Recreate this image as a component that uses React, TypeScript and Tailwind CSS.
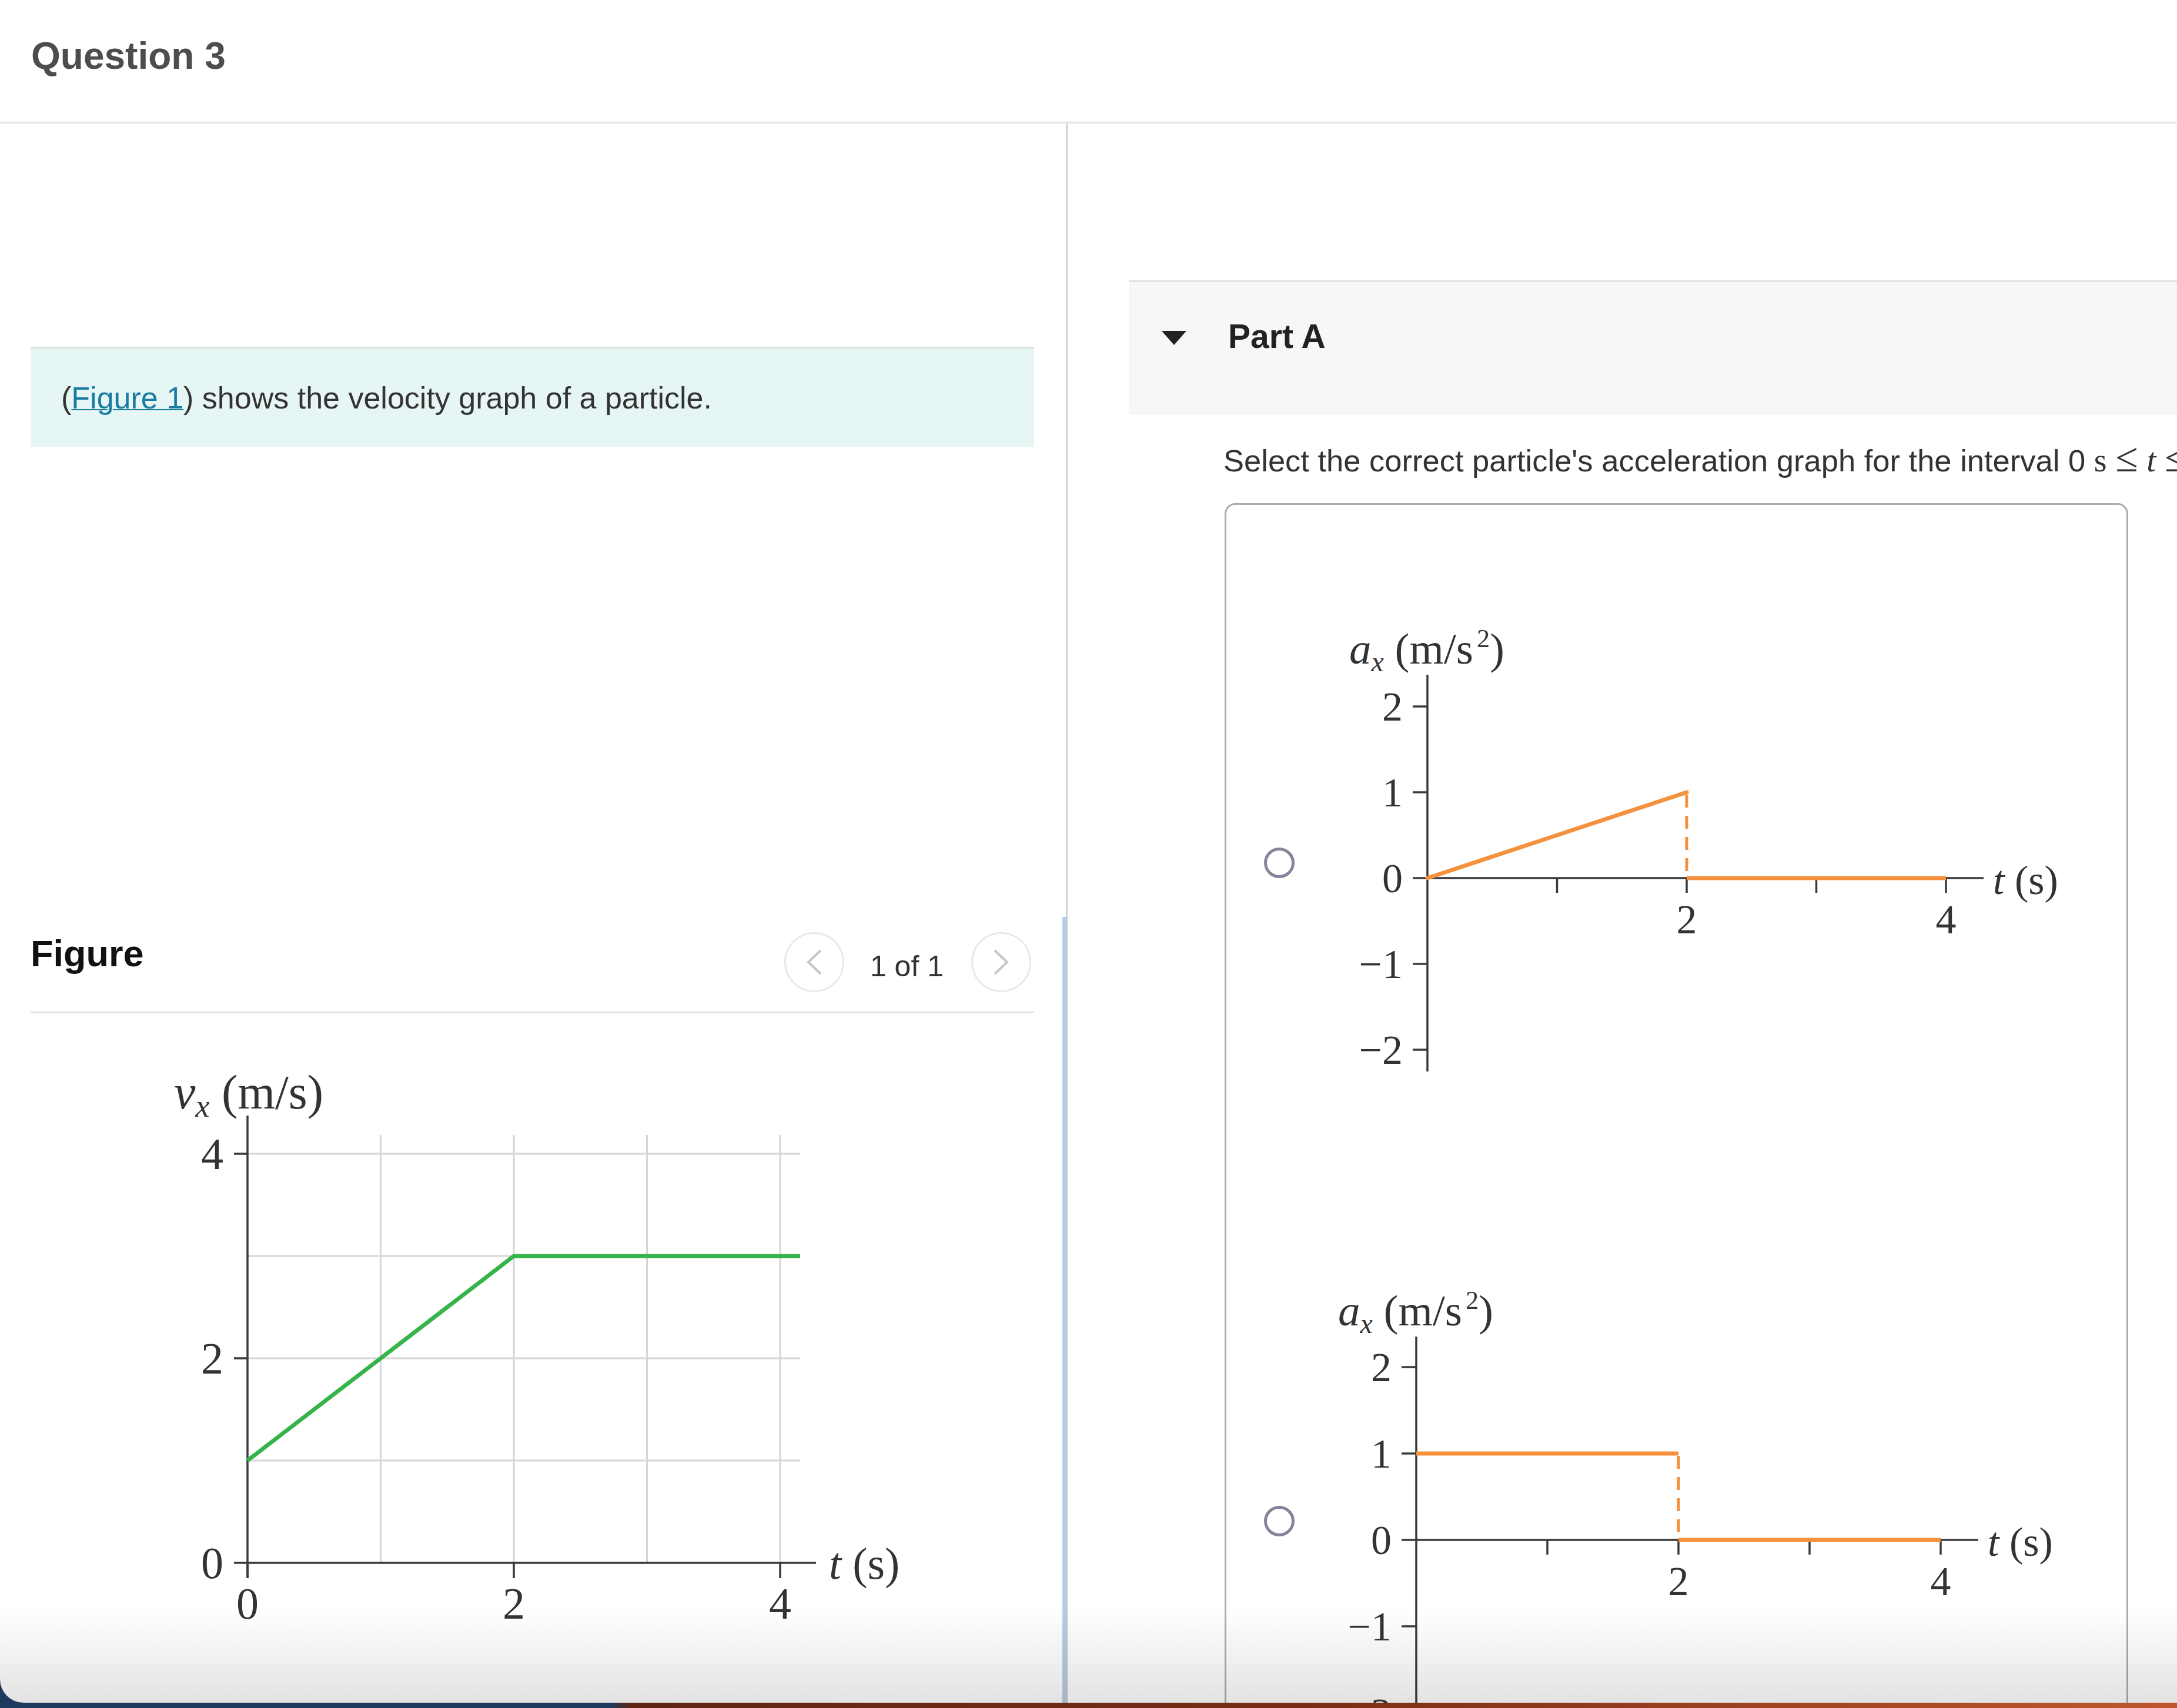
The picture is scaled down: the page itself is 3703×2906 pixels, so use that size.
import React from 'react';

// velocity graph shown under "Figure"
const VelocityGraph: React.FC = () => {
  const ox = 181;
  const oy = 859;
  const ux = 226.5;
  const uy = 174;
  const X = (t: number) => ox + t * ux;
  const Y = (v: number) => oy - v * uy;
  const serif = "'Liberation Serif', 'Times New Roman', serif";

  return (
    <svg width={1400} height={1000} viewBox="0 0 1400 1000" className="block">
      {[1, 2, 3, 4].map((v) => (
        <line key={`h${v}`} x1={ox} x2={1121} y1={Y(v)} y2={Y(v)} stroke="#d6d6d6" strokeWidth={3} />
      ))}
      {[1, 2, 3, 4].map((t) => (
        <line key={`v${t}`} x1={X(t)} x2={X(t)} y1={131} y2={oy} stroke="#d6d6d6" strokeWidth={3} />
      ))}
      <line x1={ox} x2={ox} y1={98} y2={885} stroke="#3a3a3a" strokeWidth={3.5} />
      <line x1={158} x2={1148} y1={oy} y2={oy} stroke="#3a3a3a" strokeWidth={3.5} />
      {[4, 2].map((v) => (
        <line key={`ty${v}`} x1={158} x2={ox} y1={Y(v)} y2={Y(v)} stroke="#3a3a3a" strokeWidth={3.5} />
      ))}
      {[0, 2, 4].map((t) => (
        <line key={`tx${t}`} x1={X(t)} x2={X(t)} y1={oy} y2={885} stroke="#3a3a3a" strokeWidth={3.5} />
      ))}
      <polyline
        points={`${ox},${Y(1)} ${X(2)},${Y(3)} 1121,${Y(3)}`}
        fill="none"
        stroke="#36b44b"
        strokeWidth={7}
        strokeLinejoin="round"
      />
      <g fontFamily={serif} fontSize={76} fill="#333">
        {[4, 2, 0].map((v) => (
          <text key={`ly${v}`} x={140} y={Y(v) + 26} textAnchor="end">
            {v}
          </text>
        ))}
        {[0, 2, 4].map((t) => (
          <text key={`lx${t}`} x={X(t)} y={954} textAnchor="middle">
            {t}
          </text>
        ))}
        <text x={1170} y={886}>
          <tspan fontStyle="italic">t</tspan>
          <tspan>{' (s)'}</tspan>
        </text>
        <text x={56} y={86} fontSize={82}>
          <tspan fontStyle="italic">v</tspan>
          <tspan fontStyle="italic" fontSize={54} dy={14}>x</tspan>
          <tspan dy={-14}>{' (m/s)'}</tspan>
        </text>
      </g>
    </svg>
  );
};

interface AccelGraphProps {
  ox: number;
  zero: number;
  unit: number;
  ux: number;
  variant: 'ramp' | 'step';
}

// one answer choice: acceleration graph
const AccelGraph: React.FC<AccelGraphProps> = ({ ox, zero, unit, ux, variant }) => {
  const X = (t: number) => ox + t * ux;
  const Y = (a: number) => zero - a * unit;
  const serif = "'Liberation Serif', 'Times New Roman', serif";
  const orange = '#f5913d';

  return (
    <svg width={1300} height={860} viewBox="0 0 1300 860" className="block">
      <line x1={ox} x2={ox} y1={zero - 346} y2={zero + 329} stroke="#3a3a3a" strokeWidth={3.5} />
      <line x1={ox - 25} x2={X(4) + 64} y1={zero} y2={zero} stroke="#3a3a3a" strokeWidth={3.5} />
      {[2, 1, -1, -2].map((a) => (
        <line key={`ty${a}`} x1={ox - 25} x2={ox} y1={Y(a)} y2={Y(a)} stroke="#3a3a3a" strokeWidth={3.5} />
      ))}
      {[1, 2, 3, 4].map((t) => (
        <line key={`tx${t}`} x1={X(t)} x2={X(t)} y1={zero} y2={zero + 25} stroke="#3a3a3a" strokeWidth={3.5} />
      ))}
      {variant === 'ramp' ? (
        <line x1={ox} y1={zero} x2={X(2)} y2={Y(1)} stroke={orange} strokeWidth={7} strokeLinecap="round" />
      ) : (
        <line x1={ox} y1={Y(1)} x2={X(2)} y2={Y(1)} stroke={orange} strokeWidth={7} />
      )}
      <line x1={X(2)} x2={X(2)} y1={Y(1) + 4} y2={zero} stroke={orange} strokeWidth={5} strokeDasharray="22 14" />
      <line x1={X(2)} x2={X(4)} y1={zero} y2={zero} stroke={orange} strokeWidth={7} />
      <g fontFamily={serif} fontSize={70} fill="#333">
        {[2, 1, 0, -1, -2].map((a) => (
          <text key={`ly${a}`} x={ox - 42} y={Y(a) + 24} textAnchor="end">
            {a < 0 ? `\u2212${-a}` : a}
          </text>
        ))}
        {[2, 4].map((t) => (
          <text key={`lx${t}`} x={X(t)} y={zero + 94} textAnchor="middle">
            {t}
          </text>
        ))}
        <text x={X(4) + 80} y={zero + 27}>
          <tspan fontStyle="italic">t</tspan>
          <tspan>{' (s)'}</tspan>
        </text>
        <text x={ox - 133} y={zero - 365} fontSize={75}>
          <tspan fontStyle="italic">a</tspan>
          <tspan fontStyle="italic" fontSize={48} dy={13}>x</tspan>
          <tspan dy={-13}>{' (m/s'}</tspan>
          <tspan fontSize={44} dx={6} dy={-28}>2</tspan>
          <tspan dy={28}>)</tspan>
        </text>
      </g>
    </svg>
  );
};

const NavButton: React.FC<{ dir: 'left' | 'right' }> = ({ dir }) => (
  <div className="flex h-[102px] w-[102px] items-center justify-center rounded-full border-[3px] border-[#e9e9e9]">
    <svg width={30} height={46} viewBox="0 0 30 46">
      {dir === 'left' ? (
        <polyline points="26,3 5,23 26,43" fill="none" stroke="#c6c6c6" strokeWidth={4} />
      ) : (
        <polyline points="4,3 25,23 4,43" fill="none" stroke="#c6c6c6" strokeWidth={4} />
      )}
    </svg>
  </div>
);

const Radio: React.FC = () => (
  <div className="mt-[417px] h-[52px] w-[52px] shrink-0 rounded-full border-[5px] border-[#84849a] bg-white" />
);

export default function App() {
  return (
    <div className="relative h-[2906px] w-[3703px] overflow-hidden bg-[linear-gradient(90deg,#1b3a5e_0%,#1b3a5e_28%,#5e2513_29%,#7a2d15_60%,#c0572c_100%)]">
      <div className="relative h-[2897px] w-full overflow-hidden rounded-bl-[40px] bg-white [font-family:'Liberation_Sans',Arial,sans-serif]">
        {/* 题目头部 */}
        <header className="h-[210px] border-b-[3px] border-[#e2e2e2] pl-[53px] pt-[59px]">
          <h1 className="text-[64px] font-bold leading-[72px] text-[#4d4d4d]">Question 3</h1>
        </header>

        <div className="flex h-[2687px]">
          {/* 左侧：题干与图 */}
          <section className="relative w-[1816px] shrink-0 border-r-[3px] border-[#c9d5e3] pl-[52px] pr-[54px]">
            <div className="mt-[380px] flex h-[170px] items-center border-t-[3px] border-[#dcdcdc] bg-[#e6f6f5] pl-[52px] text-[52px] text-[#333]">
              <p className="whitespace-nowrap">
                (<span className="text-[#1a7ca2] underline decoration-2">Figure 1</span>) shows the velocity graph of a particle.
              </p>
            </div>

            <div className="mt-[819px] flex items-start justify-between border-b-[3px] border-[#e0e0e0] pb-[33px]">
              <h2 className="mt-[7px] text-[63px] font-bold leading-[72px] text-[#111]">Figure</h2>
              <div className="mr-[5px] mt-[7px] flex items-center">
                <NavButton dir="left" />
                <span className="ml-[44px] mr-[47px] mt-[14px] text-[50px] leading-[58px] text-[#333]">1 of 1</span>
                <NavButton dir="right" />
              </div>
            </div>

            <div className="ml-[188px] mt-[76px]">
              <VelocityGraph />
            </div>

            <div className="absolute right-[-3px] top-[1350px] h-[1400px] w-[9px] bg-[#b9cbdf]" />
          </section>

          {/* 右侧：Part A */}
          <section className="min-w-0 flex-1 pl-[104px] pt-[267px]">
            <div className="flex h-[229px] items-start border-t-[3px] border-[#e0e0e0] bg-[#f7f7f7] pl-[56px] pt-[60px]">
              <svg width={42} height={24} viewBox="0 0 42 24" className="mt-[23px] shrink-0">
                <polygon points="0,0 42,0 21,24" fill="#222" />
              </svg>
              <span className="ml-[71px] text-[57px] font-bold leading-[64px] text-[#222]">Part A</span>
            </div>

            <p className="ml-[161px] mt-[43px] whitespace-nowrap text-[52.5px] leading-[60px] text-[#333]">
              Select the correct particle's acceleration graph for the interval 0{' '}
              <span className="[font-family:'Liberation_Serif',serif] text-[56px]">s</span>{' '}
              <span className="[font-family:'Liberation_Serif',serif] text-[70px]">≤</span>{' '}
              <span className="[font-family:'Liberation_Serif',serif] text-[58px] italic">t</span>{' '}
              <span className="[font-family:'Liberation_Serif',serif] text-[70px]">≤</span>{' '}
              <span className="[font-family:'Liberation_Serif',serif] text-[56px]">4 s</span>.
            </p>

            <div className="ml-[163px] mt-[42px] h-[2200px] w-[1537px] rounded-[18px] border-[3px] border-[#acacac] pl-[64px] pt-[166px]">
              <div className="flex items-start">
                <Radio />
                <div className="ml-[58px]">
                  <AccelGraph ox={168} zero={469} unit={146} ux={220.5} variant="ramp" />
                </div>
              </div>
              <div className="mt-[260px] flex items-start">
                <Radio />
                <div className="ml-[58px]">
                  <AccelGraph ox={149} zero={475} unit={147} ux={223} variant="step" />
                </div>
              </div>
            </div>
          </section>
        </div>

        {/* 底部渐隐 */}
        <div className="pointer-events-none absolute inset-x-0 bottom-0 h-[160px] bg-linear-to-b from-transparent to-black/[0.11]" />
      </div>
    </div>
  );
}
